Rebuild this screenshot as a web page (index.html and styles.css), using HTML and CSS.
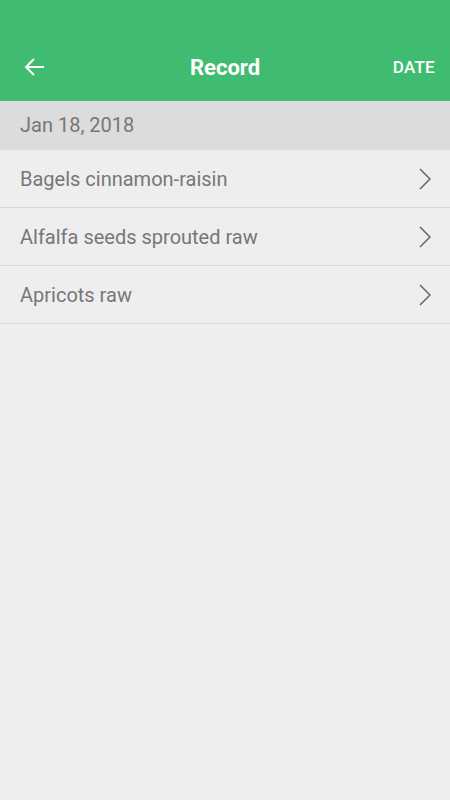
FILE: index.html
```html
<!DOCTYPE html>
<html lang="en">
  <head>
    <meta charset="UTF-8" />
    <meta name="viewport" content="width=device-width, initial-scale=1.0" />
    <title>Record</title>
    <link rel="stylesheet" href="styles.css">
  </head>
  <body>
    <header class="topbar">
      <button class="back">
        <svg width="24" height="24" viewBox="0 0 24 24">
          <path d="M21 12H3M11 4l-8 8 8 8" fill="none" stroke="#fff" stroke-width="2" />
        </svg>
      </button>
      <h1 class="title">Record</h1>
      <button class="date-btn">DATE</button>
    </header>

    <div class="day">Jan 18, 2018</div>
    <ul class="list">
      <li class="item">
        <span>Bagels cinnamon-raisin</span>
        <svg class="chev" width="12" height="22" viewBox="0 0 12 22"><path d="M1 1l10 10L1 21" fill="none" stroke="#666" stroke-width="1.5" /></svg>
      </li>
      <li class="item">
        <span>Alfalfa seeds sprouted raw</span>
        <svg class="chev" width="12" height="22" viewBox="0 0 12 22"><path d="M1 1l10 10L1 21" fill="none" stroke="#666" stroke-width="1.5" /></svg>
      </li>
      <li class="item">
        <span>Apricots raw</span>
        <svg class="chev" width="12" height="22" viewBox="0 0 12 22"><path d="M1 1l10 10L1 21" fill="none" stroke="#666" stroke-width="1.5" /></svg>
      </li>
    </ul>
  </body>
</html>
```

FILE: styles.css
```css
body {
  margin: 0;
  background-color: #eeeeee;
  font-family: Roboto, "Noto Sans", sans-serif;
}
.topbar {
  display: grid;
  grid-template-columns: 1fr auto 1fr;
  align-items: center;
  height: 101px;
  padding: 33px 15px 0 23px;
  box-sizing: border-box;
  background-color: #40bc72;
  color: #fff;
}
.back {
  display: flex;
  background: none;
  border: none;
  padding: 0;
}
.title {
  margin: 0 0 0 -8px;
  font-size: 22px;
  font-weight: bold;
}
.date-btn {
  justify-self: end;
  background: none;
  border: none;
  padding: 0;
  color: #fff;
  font-family: Roboto, sans-serif;
  font-size: 17px;
  font-weight: 500;
  letter-spacing: 0.3px;
}
.day {
  height: 49px;
  line-height: 49px;
  padding-left: 20px;
  background-color: #dcdcdc;
  color: #777;
  font-size: 20px;
}
.list {
  list-style: none;
  margin: 0;
  padding: 0;
}
.item {
  display: flex;
  align-items: center;
  justify-content: space-between;
  height: 57px;
  padding: 0 19px 0 20px;
  border-bottom: 1px solid #d6d6d6;
  color: #777;
  font-size: 20px;
}
```
